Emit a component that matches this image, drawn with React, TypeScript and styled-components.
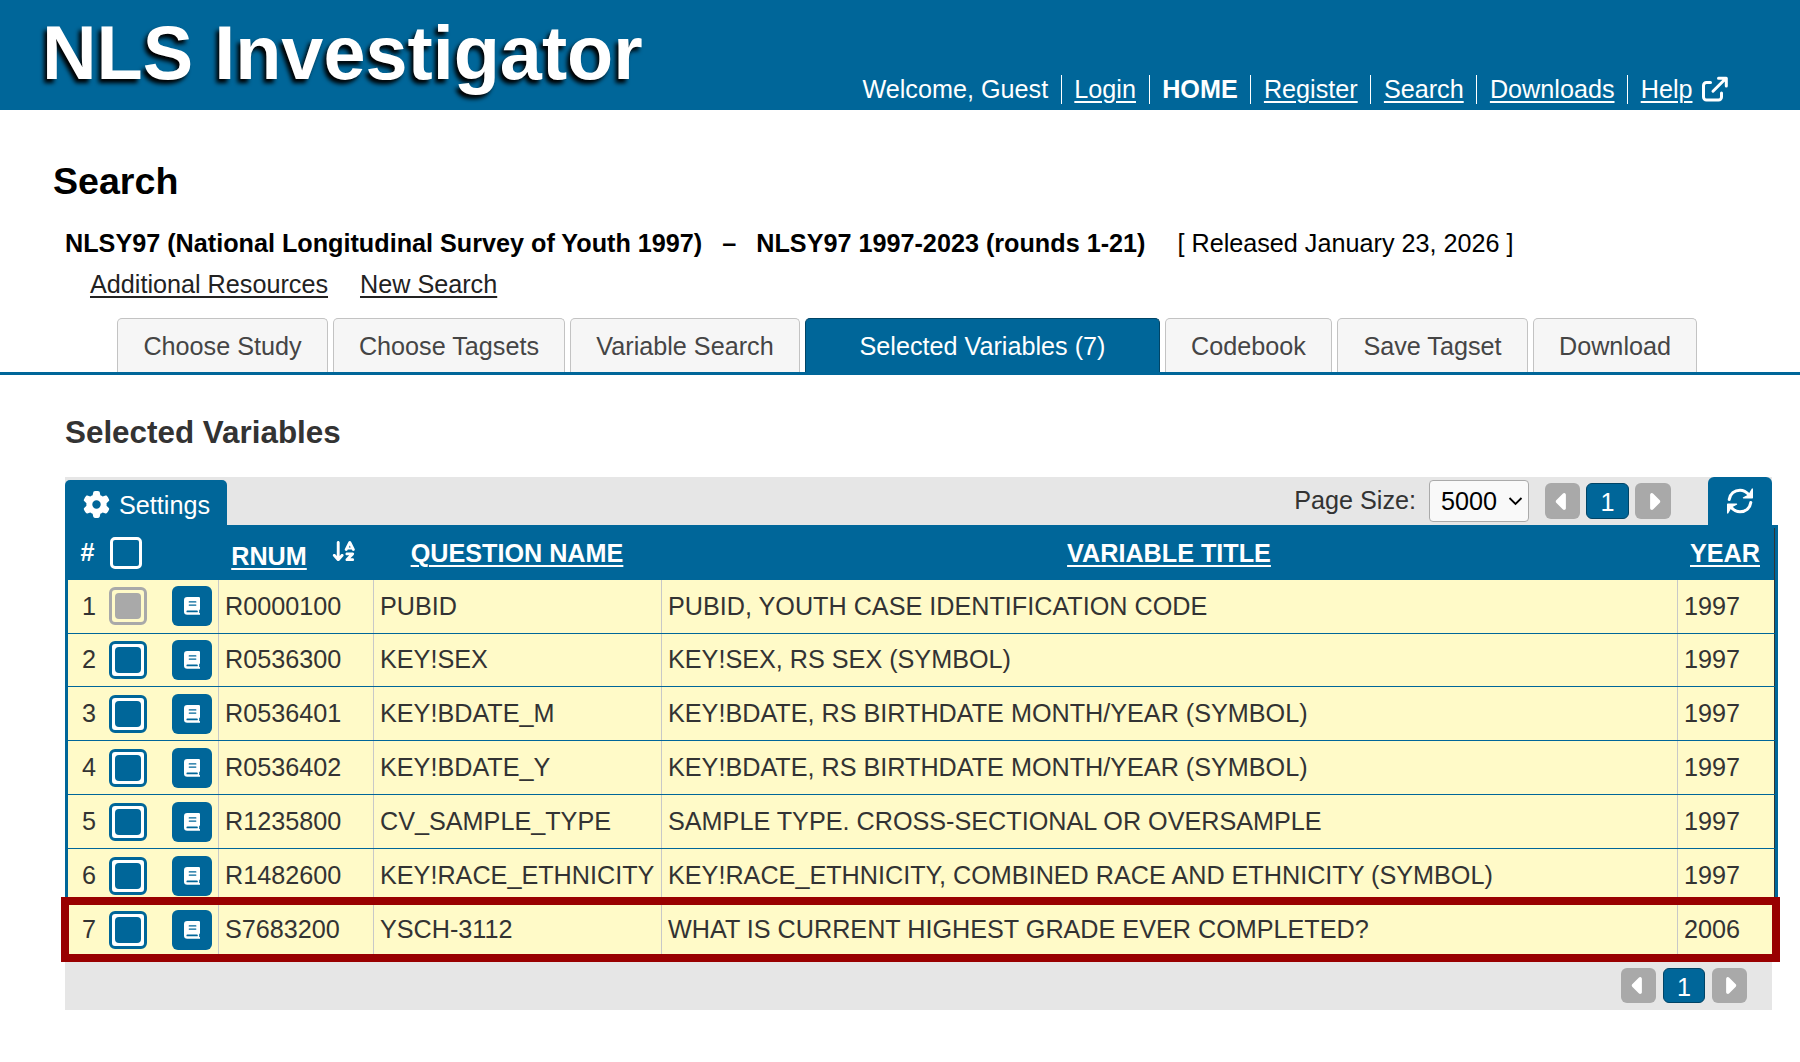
import React from 'react';
import styled, { createGlobalStyle, css } from 'styled-components';
import {
  FaGear,
  FaArrowDownAZ,
  FaCaretLeft,
  FaCaretRight,
} from 'react-icons/fa6';

const BLUE = '#006699';
const EDGE = '#004466';

const GlobalStyle = createGlobalStyle`
  * { box-sizing: border-box; }
  body {
    margin: 0;
    background: #fff;
    color: #333;
    font-family: "Liberation Sans", Arial, sans-serif;
    font-size: 25.2px;
    line-height: 30px;
  }
`;

const Page = styled.div`
  width: 1800px;
  height: 1062px;
  overflow: hidden;
`;

const Header = styled.header`
  display: flex;
  justify-content: space-between;
  height: 110px;
  padding: 0 72px 0 42px;
  background: ${BLUE};
  color: #fff;
  white-space: nowrap;
`;

const Brand = styled.h1`
  margin: 0;
  padding-top: 9px;
  font-size: 75.6px;
  line-height: 88px;
  text-shadow: -3px 4px 4px #000;
`;

const Nav = styled.nav`
  display: flex;
  align-items: flex-start;
  padding-top: 75px;
`;

const NavItem = styled.span<{ $first?: boolean; $bold?: boolean }>`
  display: flex;
  height: 29px;
  padding: 0 12.6px;
  border-left: ${(p) => (p.$first ? '0' : '1px solid #fff')};
  font-weight: ${(p) => (p.$bold ? 700 : 400)};
  line-height: 28px;
  &:last-child { padding-right: 0; }
`;

const NavLink = styled.a`
  color: #fff;
  text-decoration: underline;
  text-decoration-thickness: 2px;
  text-underline-offset: 3px;
`;

const ExternalIcon = styled.svg`
  width: 26px;
  height: 26px;
  margin: 0.5px 0 0 9.5px;
`;

const Intro = styled.section`
  height: 208px;
  padding: 50px 0 0 52px;
`;

const PageTitle = styled.h2`
  margin: 0 0 0 1px;
  color: #000;
  font-size: 37.6px;
  line-height: 42px;
`;

const StudyLine = styled.div`
  display: flex;
  gap: 20px;
  margin: 26px 0 0 13px;
  color: #000;
  white-space: pre;
`;

const Released = styled.span`
  margin-left: 12px;
`;

const Links = styled.div`
  display: flex;
  gap: 32px;
  margin: 11px 0 0 38px;
`;

const PlainLink = styled.a`
  color: #222;
  text-decoration: underline;
  text-decoration-thickness: 2px;
  text-underline-offset: 3px;
`;

const Tabs = styled.div`
  display: flex;
  gap: 5px;
  height: 57px;
  padding-left: 117px;
  border-bottom: 3px solid ${BLUE};
`;

const Tab = styled.div<{ $w: number; $active?: boolean }>`
  display: flex;
  justify-content: center;
  width: ${(p) => p.$w}px;
  padding-top: 12px;
  border: 1px solid #c3c3c3;
  border-bottom: 0;
  border-radius: 5px 5px 0 0;
  background: #f6f6f6;
  color: #454545;
  white-space: nowrap;
  ${(p) =>
    p.$active &&
    css`
      background: ${BLUE};
      border-color: ${EDGE};
      color: #fff;
    `}
`;

const Content = styled.main`
  padding: 41px 22px 0 65px;
`;

const SectionTitle = styled.h3`
  margin: 0;
  font-size: 31.4px;
  line-height: 34px;
`;

const Toolbar = styled.div`
  display: flex;
  align-items: flex-end;
  width: 1707px;
  height: 48px;
  margin-top: 27px;
  background: #e6e6e6;
`;

const SettingsTab = styled.div`
  display: flex;
  gap: 9px;
  width: 162px;
  height: 45px;
  padding: 10px 0 0 18px;
  border-radius: 5px 5px 0 0;
  background: ${BLUE};
  color: #fff;
`;

const GearIcon = styled(FaGear)`
  width: 27px;
  height: 27px;
  margin-top: 1px;
`;

const Paging = styled.div`
  display: flex;
  align-items: flex-start;
  height: 48px;
  margin-left: auto;
`;

const PageSizeLabel = styled.span`
  margin: 8px 13px 0 0;
`;

const SizeSelect = styled.div`
  display: flex;
  align-items: center;
  justify-content: space-between;
  width: 100px;
  height: 42px;
  margin: 3px 16px 0 0;
  padding: 0 5px 0 11px;
  border: 1px solid #aaa;
  border-radius: 4px;
  background: #f9f9f9;
  color: #000;
`;

const PageStep = styled.span`
  display: flex;
  align-items: center;
  justify-content: center;
  width: 35px;
  height: 35px;
  border-radius: 6px;
  background: #a9a9a9;
  color: #fff;
`;

const PageNumber = styled.span`
  width: 42px;
  height: 35px;
  padding-top: 3px;
  border: 1px solid ${EDGE};
  border-radius: 6px;
  background: ${BLUE};
  color: #fff;
  text-align: center;
`;

const Pager = styled.div<{ $footer?: boolean }>`
  display: flex;
  gap: 7px;
  margin: 10px 25px 0 0;
  ${(p) =>
    !p.$footer &&
    css`
      gap: 6px;
      margin: 6px 37px 0 0;
      ${PageStep}, ${PageNumber} { height: 36px; }
      ${PageNumber} { width: 43px; }
      ${PageStep}:last-child { width: 36px; }
    `}
`;

const RefreshTab = styled.div`
  display: flex;
  justify-content: center;
  width: 64px;
  height: 48px;
  padding-top: 11px;
  border-radius: 6px 6px 0 0;
  background: ${BLUE};
`;

const Grid = styled.div`
  position: relative;
  width: 1713px;
  border: solid ${BLUE};
  border-width: 0 3px;
`;

const rowColumns = css`
  display: grid;
  grid-template-columns: 150px 155px 288px 1016px 98px;
`;

const HeadRow = styled.div`
  ${rowColumns}
  height: 55px;
  padding-top: 3px;
  background: ${BLUE};
  color: #fff;
  font-weight: 700;
`;

const HeadCell = styled.div<{ $kind?: 'sorted' | 'edge' }>`
  display: flex;
  justify-content: center;
  padding-top: 10px;
  white-space: nowrap;
  ${(p) => p.$kind === 'sorted' && 'padding: 13px 3px 0 0;'}
  ${(p) => p.$kind === 'edge' && 'padding-right: 1px; border-right: 1px solid #333;'}
`;

const HeadTools = styled.div`
  display: flex;
  padding: 9px 0 0 12.5px;
`;

const HeadBox = styled.span`
  width: 32px;
  height: 32px;
  margin-left: 15.5px;
  border: 3px solid #fff;
  border-radius: 5px;
`;

const SortIcon = styled(FaArrowDownAZ)`
  width: 26px;
  height: 26px;
  margin: -3px 0 0 24px;
`;

const Row = styled.div<{ $h: number }>`
  ${rowColumns}
  height: ${(p) => p.$h}px;
  border-bottom: 1px solid ${BLUE};
  background: #fffac8;
  &:last-child { border-bottom: 0; }
`;

const Cell = styled.div<{ $top: number }>`
  padding: ${(p) => p.$top}px 0 0 6px;
  border-left: 1px solid #c8c8c8;
  white-space: nowrap;
  &:last-child { border-right: 1px solid #333; }
`;

const Tools = styled.div<{ $top: number }>`
  display: flex;
  padding-top: ${(p) => p.$top}px;
`;

const RowNumber = styled.span<{ $top: number }>`
  width: 28px;
  padding-top: ${(p) => p.$top}px;
  text-align: right;
`;

const Check = styled.span<{ $off?: boolean }>`
  width: 38px;
  height: 38px;
  margin: 1px 0 0 13px;
  padding: 3px;
  border: 3px solid ${(p) => (p.$off ? '#a9a9a9' : BLUE)};
  border-radius: 6px;
  background: ${(p) => (p.$off ? 'transparent' : '#fff')};
  &::before {
    content: '';
    display: block;
    height: 100%;
    border-radius: 4px;
    background: ${(p) => (p.$off ? '#a9a9a9' : BLUE)};
  }
`;

const BookButton = styled.span`
  width: 40px;
  height: 40px;
  margin-left: 25px;
  padding: 11px 0 0 12px;
  border-radius: 6px;
  background: ${BLUE};
  line-height: 0;
`;

const Highlight = styled.div`
  position: absolute;
  left: -7px;
  top: 372px;
  width: 1719px;
  height: 65px;
  border: 8px solid #990000;
`;

const Footer = styled.div`
  display: flex;
  justify-content: flex-end;
  width: 1707px;
  height: 52px;
  background: #e6e6e6;
`;

const tabs: { label: string; width: number; active?: boolean }[] = [
  { label: 'Choose Study', width: 211 },
  { label: 'Choose Tagsets', width: 232 },
  { label: 'Variable Search', width: 230 },
  { label: 'Selected Variables (7)', width: 355, active: true },
  { label: 'Codebook', width: 167 },
  { label: 'Save Tagset', width: 191 },
  { label: 'Download', width: 164 },
];

const rows = [
  ['R0000100', 'PUBID', 'PUBID, YOUTH CASE IDENTIFICATION CODE', '1997'],
  ['R0536300', 'KEY!SEX', 'KEY!SEX, RS SEX (SYMBOL)', '1997'],
  ['R0536401', 'KEY!BDATE_M', 'KEY!BDATE, RS BIRTHDATE MONTH/YEAR (SYMBOL)', '1997'],
  ['R0536402', 'KEY!BDATE_Y', 'KEY!BDATE, RS BIRTHDATE MONTH/YEAR (SYMBOL)', '1997'],
  ['R1235800', 'CV_SAMPLE_TYPE', 'SAMPLE TYPE. CROSS-SECTIONAL OR OVERSAMPLE', '1997'],
  ['R1482600', 'KEY!RACE_ETHNICITY', 'KEY!RACE_ETHNICITY, COMBINED RACE AND ETHNICITY (SYMBOL)', '1997'],
  ['S7683200', 'YSCH-3112', 'WHAT IS CURRENT HIGHEST GRADE EVER COMPLETED?', '2006'],
];

// Row heights, and the top offsets of a row's text and of its buttons.
const rowHeight = (i: number) => (i === 1 ? 53 : i === rows.length - 1 ? 55 : 54);
const textTop = (i: number) => (i === 1 ? 10 : 11);
const toolsTop = (i: number) => (i < 2 ? 6 : 7);

const BookIcon = () => (
  <svg width="16" height="18" viewBox="0 0 16 18">
    <path
      fill="#fff"
      d="M3.2 0H14.8A1.2 1.2 0 0 1 16 1.2V12a1.2 1.2 0 0 1-.8 1.1V16H15.400a.9 .9 0 0 1 0 1.8H3.2A3.200 3.200 0 0 1 0 14.600V3.200A3.200 3.200 0 0 1 3.200 0Z"
    />
    <path stroke={BLUE} strokeWidth="1.3" strokeLinecap="round" d="M5.300 4.900h6.500M5.300 8.100h6.500" />
    <path stroke={BLUE} strokeWidth="1.7" strokeLinecap="round" d="M3.300 14.400h9.700" />
  </svg>
);

const RefreshIcon = () => (
  <svg width="26" height="26" viewBox="0 0 26 26">
    <g fill="none" stroke="#fff" strokeWidth="3" strokeLinecap="round">
      <path d="M2.200 11.500C3 5.800 7.500 2.200 13 2.200c3.600 0 6.300 1.500 9 4.600" />
      <path d="M23.800 14.500C23 20.200 18.500 23.800 13 23.800c-3.600 0-6.300-1.500-9-4.600" />
    </g>
    <g fill="#fff" stroke="#fff" strokeWidth="1.400" strokeLinejoin="round">
      <path d="M25.300 1v8.800H16.500L21.800 7.200Z" />
      <path d="M.7 25v-8.800H9.500L4.200 18.800Z" />
    </g>
  </svg>
);

const PagerControls = ({ footer }: { footer?: boolean }) => (
  <Pager $footer={footer}>
    <PageStep><FaCaretLeft size={27} /></PageStep>
    <PageNumber>1</PageNumber>
    <PageStep><FaCaretRight size={27} /></PageStep>
  </Pager>
);

export default function App() {
  return (
    <Page>
      <GlobalStyle />
      <Header>
        <Brand>NLS Investigator</Brand>
        <Nav>
          <NavItem $first>Welcome, Guest</NavItem>
          <NavItem><NavLink>Login</NavLink></NavItem>
          <NavItem $bold>HOME</NavItem>
          <NavItem><NavLink>Register</NavLink></NavItem>
          <NavItem><NavLink>Search</NavLink></NavItem>
          <NavItem><NavLink>Downloads</NavLink></NavItem>
          <NavItem>
            <NavLink>Help</NavLink>
            <ExternalIcon viewBox="0 0 26 26" fill="none" stroke="#fff" strokeWidth="3" strokeLinecap="round" strokeLinejoin="round">
              <path d="M8.500 6.500H4.500a3 3 0 0 0-3 3V21a3 3 0 0 0 3 3H16.500a3 3 0 0 0 3-3v-4" />
              <path d="M11 15.200 23.500 2.700M16.500 2.200h7.800V10" />
            </ExternalIcon>
          </NavItem>
        </Nav>
      </Header>
      <Intro>
        <PageTitle>Search</PageTitle>
        <StudyLine>
          <b>NLSY97 (National Longitudinal Survey of Youth 1997)</b>
          <b>–</b>
          <b>NLSY97 1997-2023 (rounds 1-21)</b>
          <Released>[ Released January 23, 2026 ]</Released>
        </StudyLine>
        <Links>
          <PlainLink>Additional Resources</PlainLink>
          <PlainLink>New Search</PlainLink>
        </Links>
      </Intro>
      <Tabs>
        {tabs.map((t) => (
          <Tab key={t.label} $w={t.width} $active={t.active}>{t.label}</Tab>
        ))}
      </Tabs>
      <Content>
        <SectionTitle>Selected Variables</SectionTitle>
        <Toolbar>
          <SettingsTab><GearIcon />Settings</SettingsTab>
          <Paging>
            <PageSizeLabel>Page Size:</PageSizeLabel>
            <SizeSelect>
              5000
              <svg width="15" height="10" viewBox="0 0 15 10" fill="none" stroke="#000" strokeWidth="1.800">
                <path d="M1.500 2 7.500 8 13.500 2" />
              </svg>
            </SizeSelect>
            <PagerControls />
          </Paging>
          <RefreshTab><RefreshIcon /></RefreshTab>
        </Toolbar>
        <Grid>
          <HeadRow>
            <HeadTools>#<HeadBox /></HeadTools>
            <HeadCell $kind="sorted"><NavLink>RNUM</NavLink><SortIcon /></HeadCell>
            <HeadCell><NavLink>QUESTION NAME</NavLink></HeadCell>
            <HeadCell><NavLink>VARIABLE TITLE</NavLink></HeadCell>
            <HeadCell $kind="edge"><NavLink>YEAR</NavLink></HeadCell>
          </HeadRow>
          {rows.map(([rnum, ...cells], i) => (
            <Row key={rnum} $h={rowHeight(i)}>
              <Tools $top={toolsTop(i)}>
                <RowNumber $top={textTop(i) - toolsTop(i)}>{i + 1}</RowNumber>
                <Check $off={i === 0} />
                <BookButton><BookIcon /></BookButton>
              </Tools>
              <Cell $top={textTop(i)}>{rnum}</Cell>
              {cells.map((text) => (
                <Cell key={text} $top={textTop(i)}>{text}</Cell>
              ))}
            </Row>
          ))}
          <Highlight />
        </Grid>
        <Footer><PagerControls footer /></Footer>
      </Content>
    </Page>
  );
}
